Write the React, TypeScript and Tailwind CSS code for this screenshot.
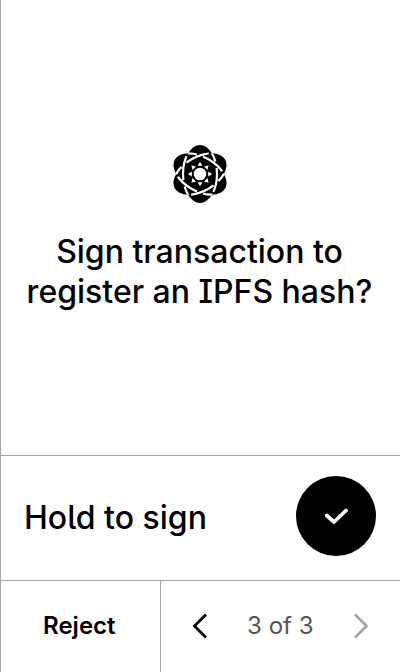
import React from "react";

function AtomIcon() {
  return (
    <svg width="54" height="58" viewBox="-27 -29 54 58" aria-hidden="true">
      <mask id="weave" maskUnits="userSpaceOnUse" x="-30" y="-30" width="60" height="60">
        <ellipse rx="17" ry="29" fill="#fff" transform="rotate(60)" />
        <ellipse rx="17" ry="29" fill="#fff" transform="rotate(120)" />
        <circle cy="-18.6" r="3.2" transform="rotate(60)" />
        <circle cy="18.6" r="3.2" transform="rotate(60)" />
        <circle cy="-23.5" r="3" transform="rotate(150)" />
        <circle cy="23.5" r="3" transform="rotate(150)" />
      </mask>
      {[0, 60, 120].map((t) => (
        <ellipse key={t} rx="17" ry="29" transform={`rotate(${t})`} />
      ))}
      {[0, 60, 120].map((t) => (
        <g key={t} transform={`rotate(${t})`}>
          <ellipse rx="17" ry="29" fill="none" stroke="#fff" strokeWidth="2.2" mask="url(#weave)" />
        </g>
      ))}
      <circle r="6.3" fill="#fff" />
      {[0, 45, 90, 135, 180, 225, 270, 315].map((t) => (
        <path key={t} d="M-2.4 -8.2 L0 -12.2 L2.4 -8.2 Z" fill="#fff" transform={`rotate(${t})`} />
      ))}
    </svg>
  );
}

export default function App() {
  return (
    <div className="flex min-h-screen flex-col border-l border-[#a6a6a6] bg-white font-['Inter',sans-serif] text-black [font-feature-settings:'cv05','cv08']">
      <main className="flex flex-1 flex-col items-center justify-center gap-[29px] pt-px pr-[18px] pl-4">
        <AtomIcon />
        <h1 className="text-center text-[32px] leading-10 font-medium">
          Sign transaction to
          <br />
          register an IPFS hash?
        </h1>
      </main>
      <section className="flex h-[125px] items-center justify-between border-t border-[#a6a6a6] pr-6 pl-[23px]">
        <span id="hold-label" className="text-[32px] leading-10 font-medium">Hold to sign</span>
        <button type="button" aria-labelledby="hold-label" className="mt-5 flex size-20 items-center justify-center self-start rounded-full bg-black">
          <svg width="40" height="40" viewBox="0 0 40 40" fill="none" stroke="#fff" strokeWidth="3.8" strokeLinecap="round" strokeLinejoin="round" aria-hidden="true">
            <path d="M10.8 19.5 L18 26 L30 14.5" />
          </svg>
        </button>
      </section>
      <footer className="grid h-23 grid-cols-5 border-t border-[#a6a6a6]">
        <button type="button" className="col-span-2 border-r border-[#a6a6a6] pr-0.5 pb-0.5 text-2xl font-semibold">
          Reject
        </button>
        <nav aria-label="Pages" className="col-span-3 flex items-center justify-between px-[19px] pb-0.5">
          <button type="button" aria-label="Previous page" className="flex size-10 items-center justify-center">
            <svg width="40" height="40" viewBox="0 0 40 40" fill="none" stroke="#000" strokeWidth="2.8" aria-hidden="true">
              <path d="M26 8.5 L14.5 20 L26 31.5" />
            </svg>
          </button>
          <span className="text-2xl text-[#545454]">3 of 3</span>
          <button type="button" disabled aria-label="Next page" className="flex size-10 items-center justify-center">
            <svg width="40" height="40" viewBox="0 0 40 40" fill="none" stroke="#a6a6a6" strokeWidth="2.8" aria-hidden="true">
              <path d="M14 8.5 L25.5 20 L14 31.5" />
            </svg>
          </button>
        </nav>
      </footer>
    </div>
  );
}
